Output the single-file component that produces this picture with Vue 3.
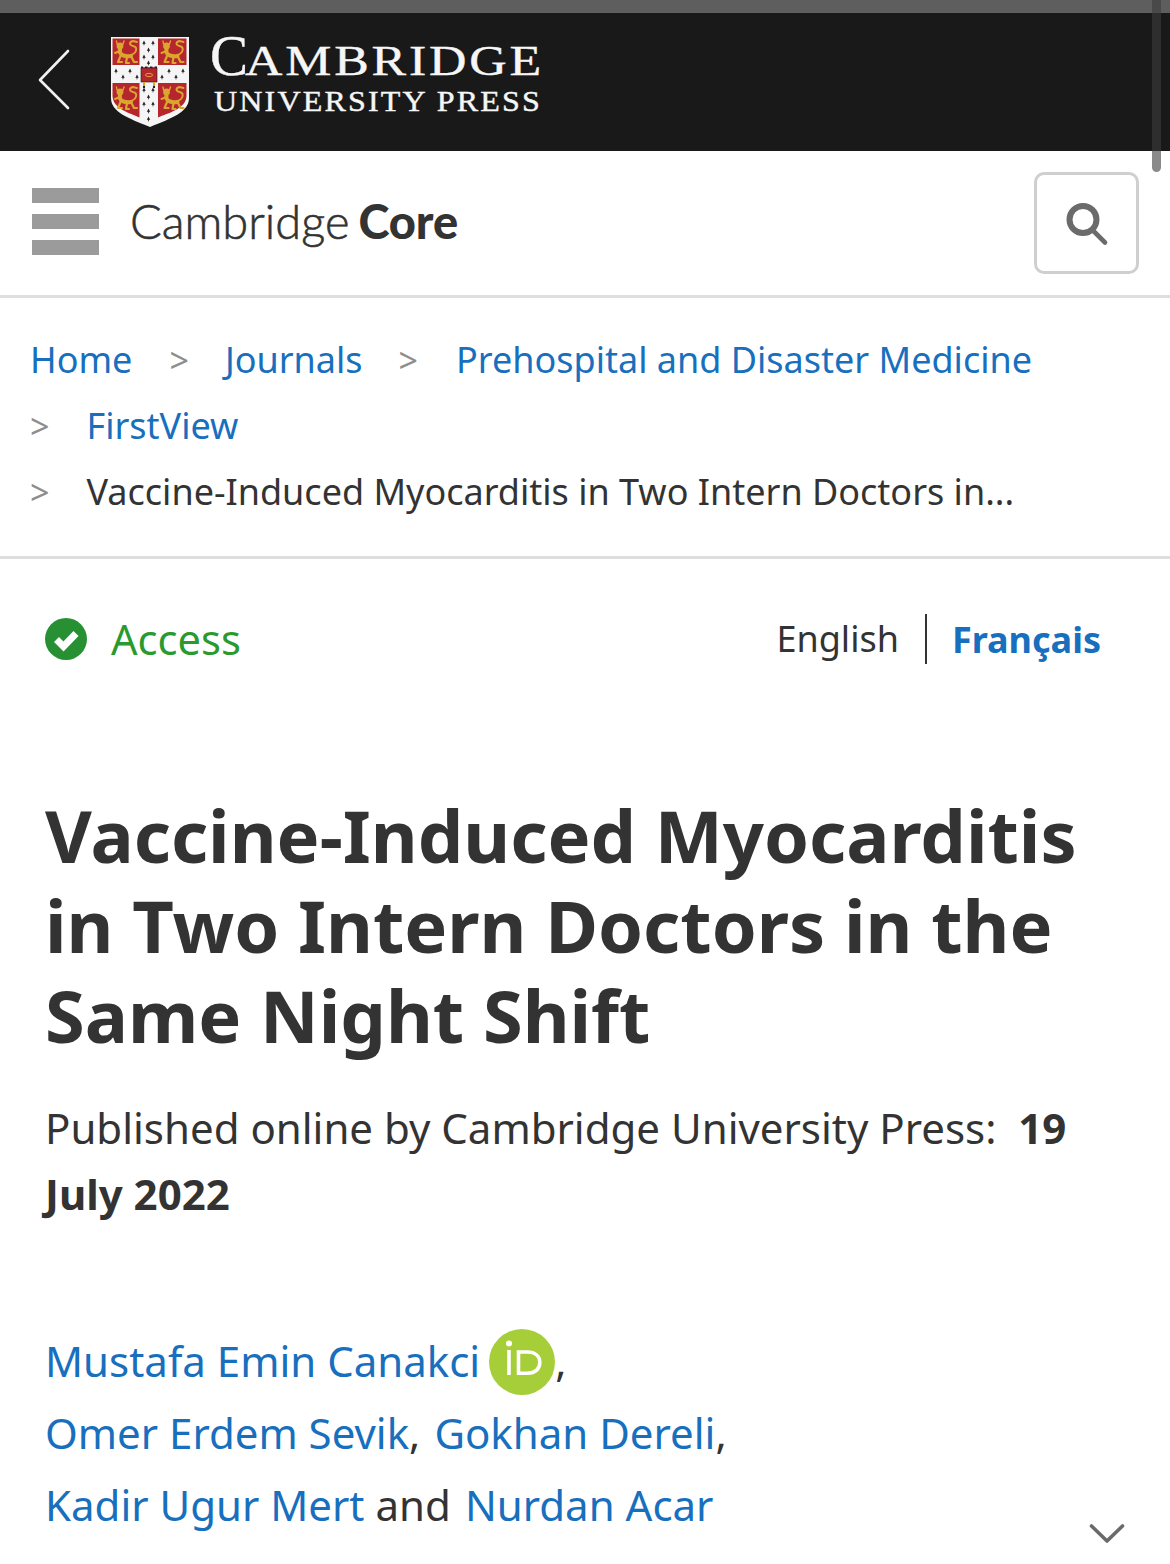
<script setup>
const redQuarters = [
  { d: 'M2.5 2.5 H29.5 V29 H2.5 Z', x: 3, y: 3 },
  { d: 'M48 2.5 H76.5 V29 H48 Z', x: 49.5, y: 3 },
  { d: 'M2.5 47 H29.5 V81.5 C20 77 3 73 2.5 60 Z', x: 3, y: 49 },
  { d: 'M48 47 H76.5 V60 C76 73 58 77 48 81.5 Z', x: 49.5, y: 49 }
]
const ermines = [
  [34, 7], [43, 7], [38.5, 14], [34, 21], [43, 21], [38.5, 27],
  [6, 35], [13, 41], [20, 35], [27, 41],
  [52, 41], [59, 35], [66, 41], [73, 35],
  [34, 54], [43, 54], [38.5, 61], [34, 68], [43, 68], [38.5, 75], [38.5, 83]
]
</script>

<template>
  <div class="page">
    <div class="scroll-thumb"></div>
    <div class="status-strip"></div>
    <header class="brand-bar">
      <svg class="back" width="34" height="62" viewBox="0 0 34 62" fill="none">
        <path d="M31 2 L3 31 L31 59" stroke="#f1f1f1" stroke-width="2.6" stroke-linecap="round" stroke-linejoin="round" />
      </svg>
      <svg class="shield" width="80" height="92" viewBox="0 0 80 92">
        <path d="M1 1 H79 V62 C79 76 62 82 40 91 C18 82 1 76 1 62 Z" fill="#f5f5f5" />
        <template v-for="(q, i) in redQuarters" :key="i">
          <path :d="q.d" fill="#b5262d" />
          <g :transform="`translate(${q.x} ${q.y})`" fill="none" stroke="#dba62f" stroke-width="2.8" stroke-linecap="round" stroke-linejoin="round">
            <circle cx="7" cy="7" r="3.4" fill="#dba62f" stroke="none" />
            <path d="M4 5 L3.5 2 M10 5 L11 2" stroke-width="1.4" />
            <path d="M7 10 C6 15 9 18 18 17" stroke-width="4" />
            <path d="M8 16 L5 23 H9 M18 17 L21 23 H24 M14 18 L13 24 H16" stroke-width="2.2" />
            <path d="M7 12 L2 14" stroke-width="2" />
            <path d="M18 16 C24 14 25 8 20 7 C16 6 16 3 20 2 L24 3" stroke-width="1.9" />
          </g>
        </template>
        <g fill="#222">
          <path v-for="(e, i) in ermines" :key="i" :d="`M${e[0]} ${e[1] - 2.6} l1.7 3.6 l-1.1 -.2 l-.6 2.2 l-.6 -2.2 l-1.1 .2 Z`" />
        </g>
        <rect x="31" y="32" width="16" height="14" fill="#b5262d" stroke="#1c1c1c" stroke-width="0.6" />
        <path d="M31 32 v-1.6 h2 v1 h2 v-1 h2.5 v1 h2.5 v-1 h2.5 v1 h2 v-1 h2.5 v1.6 Z" fill="#222" />
        <ellipse cx="39" cy="39" rx="3.6" ry="1.6" fill="none" stroke="#dba62f" stroke-width="1" />
        <path d="M34 46 v4 M44 46 v4" stroke="#dba62f" stroke-width="2" />
        <path d="M34 50 v2 M44 50 v2" stroke="#222" stroke-width="2" />
      </svg>
      <div class="wordmark">
        <div class="wm-top"><span class="wm-c">C</span><span class="wm-rest">AMBRIDGE</span></div>
        <div class="wm-bottom">UNIVERSITY PRESS</div>
      </div>
    </header>

    <nav class="core-bar">
      <div class="burger"><i></i><i></i><i></i></div>
      <div class="core-logo">Cambridge<b>Core</b></div>
      <button class="search" aria-label="Search">
        <svg width="44" height="44" viewBox="0 0 44 44" fill="none">
          <circle cx="18" cy="17.5" r="13.5" stroke="#6b6b6b" stroke-width="6" />
          <path d="M27.5 28 L40 40.5" stroke="#6b6b6b" stroke-width="4.6" stroke-linecap="round" />
        </svg>
      </button>
    </nav>

    <section class="crumbs">
      <div class="crumb-row">
        <a>Home</a>
        <span class="sep sep-a">&gt;</span>
        <a>Journals</a>
        <span class="sep sep-b">&gt;</span>
        <a>Prehospital and Disaster Medicine</a>
      </div>
      <div class="crumb-row">
        <span class="sep sep-c">&gt;</span>
        <a>FirstView</a>
      </div>
      <div class="crumb-row">
        <span class="sep sep-c">&gt;</span>
        <span class="current">Vaccine-Induced Myocarditis in Two Intern Doctors in...</span>
      </div>
    </section>

    <main class="article">
      <div class="meta-row">
        <div class="access">
          <svg width="42" height="42" viewBox="0 0 42 42">
            <circle cx="21" cy="21" r="21" fill="#279033" />
            <path d="M11.5 21.5 L18.5 28.5 L31 15.5" fill="none" stroke="#fff" stroke-width="7" />
          </svg>
          <span>Access</span>
        </div>
        <div class="langs">
          <span class="lang-en">English</span>
          <a class="lang-fr">Français</a>
        </div>
      </div>

      <h1>Vaccine-Induced Myocarditis in Two Intern Doctors in the Same Night Shift</h1>

      <p class="published">Published online by Cambridge University Press:&nbsp; <b>19</b> <b>July 2022</b></p>

      <div class="authors">
        <div class="author-row">
          <a>Mustafa Emin Canakci</a>
          <svg class="orcid" width="66" height="66" viewBox="0 0 66 66">
            <circle cx="33" cy="33" r="33" fill="#a6ce39" />
            <path d="M20 21 V46" stroke="#fff" stroke-width="3.6" />
            <circle cx="20" cy="14.5" r="3" fill="#fff" />
            <path d="M29.5 23 H38.5 C46.5 23 50.8 27.5 50.8 33.5 C50.8 39.5 46.5 44.2 38.5 44.2 H29.5 Z" fill="none" stroke="#fff" stroke-width="3.6" />
          </svg><span class="comma">,</span>
        </div>
        <div class="author-row">
          <a>Omer Erdem Sevik</a><span class="comma">,</span>
          <a class="next">Gokhan Dereli</a><span class="comma">,</span>
        </div>
        <div class="author-row">
          <a>Kadir Ugur Mert</a>
          <span class="and">and</span>
          <a class="next">Nurdan Acar</a>
        </div>
        <svg class="chevron" width="36" height="20" viewBox="0 0 36 20" fill="none">
          <path d="M2.5 2 L18 17 L33.5 2" stroke="#6a6a6a" stroke-width="3.6" stroke-linecap="round" stroke-linejoin="round" />
        </svg>
      </div>
    </main>
  </div>
</template>

<style>
html, body {
  margin: 0;
  background: #fff;
}
</style>

<style scoped>
.page {
  position: relative;
  width: 1170px;
  height: 1564px;
  overflow: hidden;
  background: #fff;
  font-family: "Noto Sans", "Open Sans", sans-serif;
  color: #333;
}
.scroll-thumb {
  position: absolute;
  top: 0;
  left: 1152px;
  width: 9px;
  height: 172px;
  border-radius: 0 0 5px 5px;
  background: rgba(60, 60, 60, 0.6);
  z-index: 3;
}
.status-strip {
  height: 13px;
  background: #5e5e5e;
}
.brand-bar {
  height: 138px;
  background: #191919;
  display: flex;
  align-items: center;
  padding-left: 37px;
  box-sizing: border-box;
}
.back {
  margin-top: -4px;
}
.shield {
  margin-left: 39px;
}
.wordmark {
  margin-left: 20px;
  margin-top: -16px;
  color: #f6f6f6;
  font-family: "Liberation Serif", "Times New Roman", serif;
  -webkit-text-stroke: 0.4px #f6f6f6;
}
.wm-top {
  height: 48px;
  line-height: 48px;
  white-space: nowrap;
}
.wm-c {
  font-size: 57px;
}
.wm-rest {
  display: inline-block;
  font-size: 42.5px;
  letter-spacing: 2.3px;
  margin-left: -3px;
  transform: scaleX(1.22);
  transform-origin: left center;
}
.wm-bottom {
  font-size: 28.5px;
  line-height: 28px;
  margin-top: 8px;
  margin-left: 4px;
  letter-spacing: 1.9px;
  white-space: nowrap;
  transform: scaleX(1.125);
  transform-origin: left center;
}
.core-bar {
  height: 147px;
  box-sizing: border-box;
  border-bottom: 3px solid #dedede;
  display: flex;
  align-items: center;
  padding: 0 31px 0 32px;
}
.burger {
  display: flex;
  flex-direction: column;
  gap: 11px;
  width: 67px;
  margin-top: -4px;
}
.burger i {
  display: block;
  height: 15px;
  background: #9b9b9b;
}
.core-logo {
  margin-left: 31px;
  margin-top: -4px;
  font-family: Lato, "Noto Sans", sans-serif;
  font-size: 47px;
  font-weight: 300;
  letter-spacing: 0;
  color: #333;
  -webkit-text-stroke: 0.6px #333;
  white-space: nowrap;
}
.core-logo b {
  margin-left: 9px;
  font-weight: 900;
  font-size: 47px;
  letter-spacing: -0.1px;
  color: #333;
  -webkit-text-stroke: 0;
}
.search {
  margin-left: auto;
  width: 105px;
  height: 102px;
  margin-top: -1px;
  padding: 0;
  background: #fff;
  border: 3px solid #cfcfcf;
  border-radius: 10px;
  display: flex;
  align-items: center;
  justify-content: center;
}
.search svg {
  margin-top: 2px;
}
.crumbs {
  height: 261px;
  box-sizing: border-box;
  border-bottom: 3px solid #dedede;
  padding: 29px 31px 0 30px;
  font-size: 36px;
}
.crumb-row {
  display: flex;
  height: 66px;
  line-height: 66px;
  white-space: nowrap;
}
.crumb-row a {
  color: #176fbe;
}
.sep {
  color: #8e8e8e;
  font-size: 34px;
}
.sep-a {
  margin: 0 36px 0 37px;
}
.sep-b {
  margin: 0 38px 0 36px;
}
.sep-c {
  margin-right: 37px;
}
.current {
  color: #333;
}
.article {
  padding: 0 46px 0 45px;
}
.meta-row {
  display: flex;
  align-items: center;
  justify-content: space-between;
  height: 50px;
  margin-top: 55px;
}
.access {
  display: flex;
  align-items: center;
  gap: 24px;
  font-size: 41.6px;
  color: #2a9a2f;
}
.langs {
  display: flex;
  align-items: center;
  margin-right: 23px;
  font-size: 36px;
}
.lang-en {
  padding-right: 26px;
  border-right: 2px solid #333;
  line-height: 50px;
}
.lang-fr {
  padding-left: 25px;
  font-weight: 700;
  color: #176fbe;
}
h1 {
  margin: 126px 0 0;
  font-size: 72.15px;
  line-height: 90px;
  font-weight: 700;
  color: #333;
  width: 1070px;
}
.published {
  margin: 35px 0 0;
  font-size: 42px;
  line-height: 66px;
  color: #333;
  width: 1050px;
}
.published b {
  font-weight: 700;
}
.authors {
  position: relative;
  margin-top: 97px;
  font-size: 42px;
}
.author-row {
  display: flex;
  align-items: center;
  height: 72px;
  white-space: nowrap;
}
.author-row a {
  color: #176fbe;
}
.orcid {
  margin-left: 9px;
  margin-top: 4px;
}
.comma {
  color: #333;
}
.next {
  margin-left: 14px;
}
.and {
  margin-left: 11px;
  color: #333;
}
.chevron {
  position: absolute;
  right: -1px;
  top: 200px;
}
</style>
